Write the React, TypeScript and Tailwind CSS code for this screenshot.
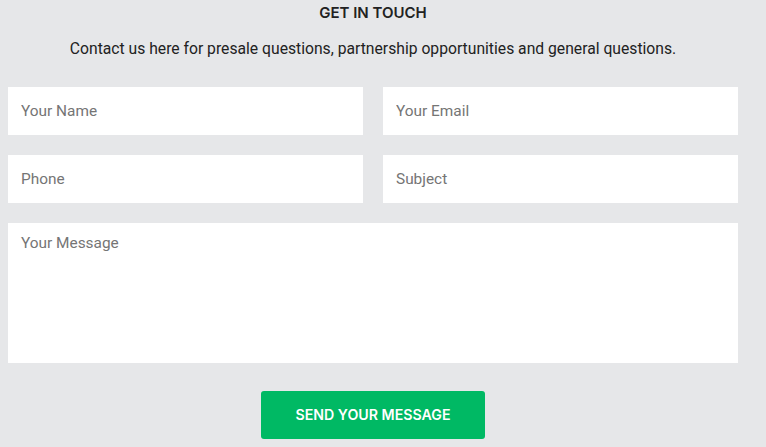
import React from "react";

export default function App() {
  const inputCls =
    "h-[48px] w-full bg-white px-[13px] text-[15.4px] text-[#333] placeholder:text-[#757575] outline-none";
  return (
    <div className="min-h-[447px] w-[766px] bg-[#e6e7e9]" style={{ fontFamily: "Roboto, 'Liberation Sans', sans-serif" }}>
      <div className="ml-[8px] w-[730px] pt-[4px]">
        <h2 className="text-center text-[15px] font-semibold leading-[18px] text-[#222]" style={{ fontFamily: "Inter, 'Liberation Sans', sans-serif" }}>
          GET IN TOUCH
        </h2>
        <p className="mt-[17px] text-center text-[15.7px] leading-[20px] text-[#222]">
          Contact us here for presale questions, partnership opportunities and general questions.
        </p>
        <form className="mt-[28px] flex flex-col gap-[20px]">
          <div className="grid grid-cols-2 gap-[20px]">
            <input className={inputCls} placeholder="Your Name" />
            <input className={inputCls} placeholder="Your Email" />
          </div>
          <div className="grid grid-cols-2 gap-[20px]">
            <input className={inputCls} placeholder="Phone" />
            <input className={inputCls} placeholder="Subject" />
          </div>
          <textarea
            className="h-[140px] w-full resize-none bg-white px-[13px] pt-[9px] text-[15.4px] text-[#333] placeholder:text-[#757575] outline-none"
            placeholder="Your Message"
          />
          <div className="mt-[8px] flex justify-center">
            <button
              type="button"
              className="h-[48px] w-[224px] rounded-[3px] bg-[#00b964] text-[14.2px] font-semibold text-white"
              style={{ fontFamily: "Inter, 'Liberation Sans', sans-serif" }}
            >
              SEND YOUR MESSAGE
            </button>
          </div>
        </form>
      </div>
    </div>
  );
}
